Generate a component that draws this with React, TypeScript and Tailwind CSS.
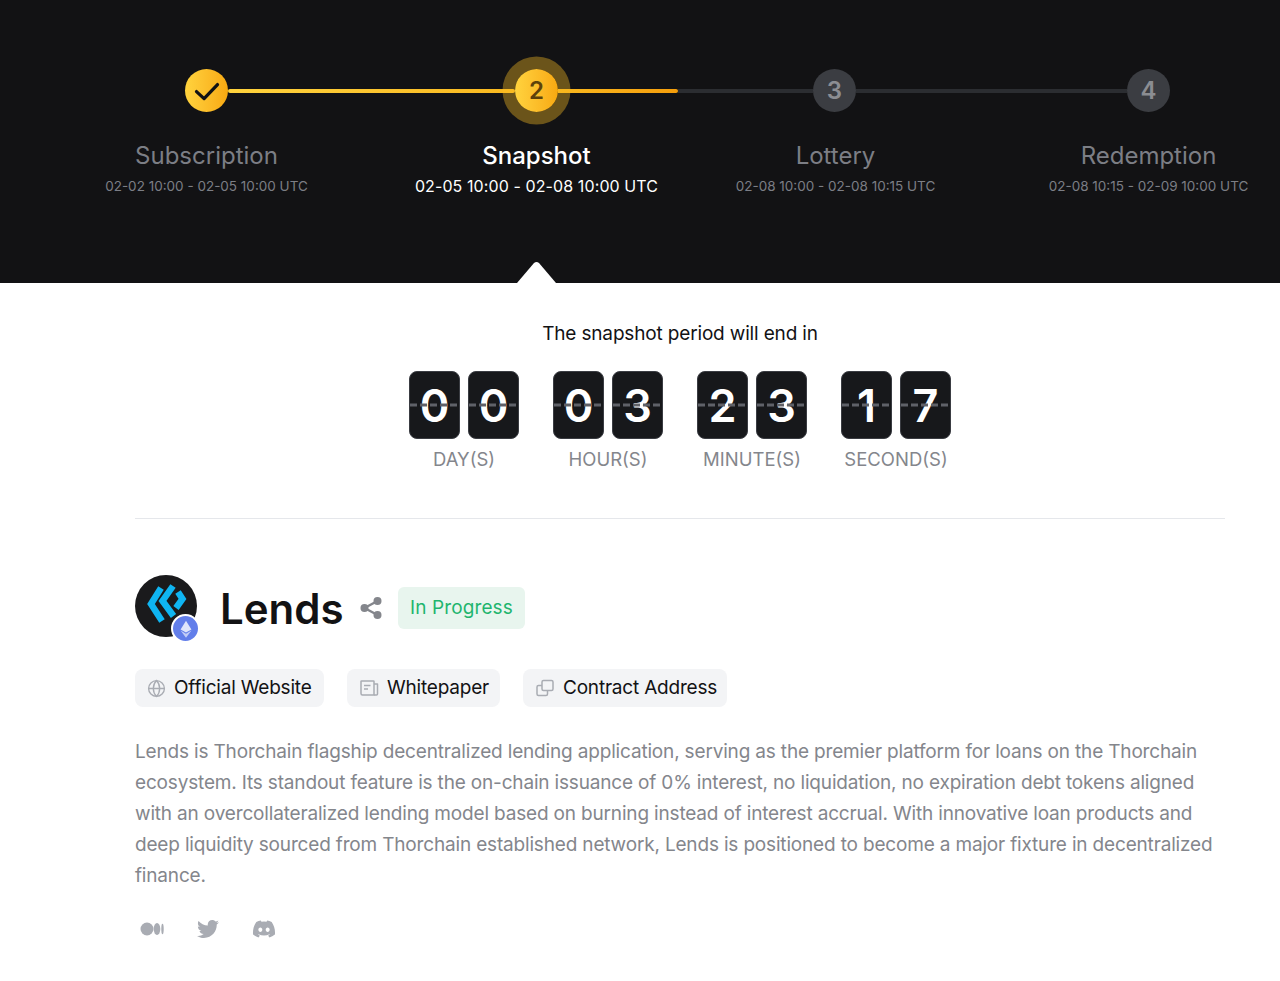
import { Globe } from 'lucide-react'
import { FaDiscord, FaTwitter } from 'react-icons/fa'

const FONT = 'font-["Inter","Liberation_Sans",sans-serif]'

const steps = [
  { title: 'Subscription', date: '02-02 10:00 - 02-05 10:00 UTC', className: 'w-[203px]' },
  { title: 'Snapshot', date: '02-05 10:00 - 02-08 10:00 UTC', className: 'ml-[107px] w-[243px]', active: true },
  { title: 'Lottery', date: '02-08 10:00 - 02-08 10:15 UTC', className: 'ml-[76px] w-[203px]' },
  { title: 'Redemption', date: '02-08 10:15 - 02-09 10:00 UTC', className: 'ml-[110px] w-[203px]' },
]

const countdown = [
  { label: 'DAY(S)', digits: ['0', '0'] },
  { label: 'HOUR(S)', digits: ['0', '3'] },
  { label: 'MINUTE(S)', digits: ['2', '3'] },
  { label: 'SECOND(S)', digits: ['1', '7'] },
]

const GoldCircle = ({ children }: { children: React.ReactNode }) => (
  <div className="flex size-[43px] shrink-0 items-center justify-center rounded-full bg-linear-to-r from-[#ffd33d] to-[#f8a90f]">
    {children}
  </div>
)

const GrayCircle = ({ n }: { n: string }) => (
  <div className="flex size-[43px] shrink-0 items-center justify-center rounded-full bg-[#3b3d42] text-[24px] font-semibold text-[#8b8d92]">
    {n}
  </div>
)

const Stepper = () => (
  <div className="relative h-[283px] bg-[#121214] pt-[69px]">
    <div className="ml-[185px] flex items-center">
      <GoldCircle>
        <svg viewBox="0 0 24 24" className="size-[28px]" fill="none" stroke="#121214" strokeWidth="2.8" strokeLinecap="round" strokeLinejoin="round">
          <path d="M3 12.5 9.5 18.5 21 6.5" />
        </svg>
      </GoldCircle>
      <div className="h-1 w-[287px] rounded-full bg-linear-to-r from-[#ffd33d] to-[#f9b81e]" />
      <div className="rounded-full shadow-[0_0_0_12.5px_rgba(252,191,36,0.38)]">
        <GoldCircle>
          <span className="text-[24px] font-semibold text-[#5d420b]">2</span>
        </GoldCircle>
      </div>
      <div className="h-1 w-[120px] rounded-r-full bg-linear-to-r from-[#f9b81e] to-[#f59e0b]" />
      <div className="h-1 w-[135px] bg-[#2b2d31]" />
      <GrayCircle n="3" />
      <div className="h-1 w-[271px] bg-[#2b2d31]" />
      <GrayCircle n="4" />
    </div>
    <div className="mt-[28px] flex pl-[105px]">
      {steps.map(step => (
        <div key={step.title} className={`${step.className} flex flex-col items-center`}>
          <div
            className={
              step.active
                ? 'text-[24px] leading-[32px] font-medium text-white'
                : 'text-[24px] leading-[32px] text-[#7c7e85]'
            }
          >
            {step.title}
          </div>
          <div
            className={
              step.active
                ? 'mt-[4px] text-[16px] leading-[20px] tracking-[0.1px] whitespace-nowrap text-white'
                : 'mt-[4px] text-[13.5px] leading-[20px] whitespace-nowrap text-[#7c7e85]'
            }
          >
            {step.date}
          </div>
        </div>
      ))}
    </div>
    <svg viewBox="0 0 40 22" className="absolute bottom-0 left-[517px] h-[22px] w-[40px]" fill="white">
      <path d="M0 22 17 2Q19.500 0 22 2L39 22Z" />
    </svg>
  </div>
)

const Countdown = () => (
  <div className="flex flex-col items-center pt-[37px]">
    <div className="text-[19px] leading-[28px] tracking-[-0.16px] text-[#121214]">The snapshot period will end in</div>
    <div className="mt-[23px] flex gap-[34px]">
      {countdown.map(group => (
        <div key={group.label} className="flex flex-col items-center">
          <div className="flex gap-[8px]">
            {group.digits.map((d, i) => (
              <div
                key={i}
                className="relative flex h-[68px] w-[51px] items-center justify-center rounded-[8px] border border-[#3a3c42] bg-[#17181b] pt-[1px] text-[45px] leading-none font-semibold text-white"
              >
                {d}
                <div className="absolute inset-x-0 top-1/2 h-[3px] -translate-y-1/2 bg-[repeating-linear-gradient(90deg,#5f6168_0_7px,transparent_7px_10px)]" />
              </div>
            ))}
          </div>
          <div className="mt-[8px] text-[18.5px] leading-[24px] text-[#84868c]">{group.label}</div>
        </div>
      ))}
    </div>
  </div>
)

const Logo = () => (
  <div className="relative size-[62px] shrink-0">
    <div className="flex size-[62px] items-center justify-center rounded-full bg-[#1a1a1c]">
      <svg viewBox="0 0 62 62" className="size-[62px]" fill="none" stroke="#0fb5f2" strokeWidth="6.5">
        <path d="M26 13 16 29 27 46" />
        <path d="M38 11 27.500 26 38.500 41" />
        <path d="M43 17 47.500 24 41 33" />
      </svg>
    </div>
    <div className="absolute top-[39px] left-[36px] flex size-[29px] items-center justify-center rounded-full border-2 border-white bg-[#627eea]">
      <svg viewBox="0 0 24 24" className="size-[20px]">
        <path d="M12 2 5.500 12.500 12 16.300 18.500 12.500Z" fill="#dfe5fb" />
        <path d="M12 17.700 5.500 13.800 12 22.500 18.500 13.800Z" fill="#c3cdf6" />
      </svg>
    </div>
  </div>
)

const LinkChip = ({ icon, label, className }: { icon: React.ReactNode; label: string; className: string }) => (
  <div className={`flex h-[38px] items-center rounded-[8px] bg-[#f3f4f6] pl-[12px] ${className}`}>
    {icon}
    <span className="pt-[1px] text-[19px] tracking-[-0.2px] whitespace-nowrap text-[#121214]">{label}</span>
  </div>
)

const description = [
  'Lends is Thorchain flagship decentralized lending application, serving as the premier platform for loans on the Thorchain',
  'ecosystem. Its standout feature is the on-chain issuance of 0% interest, no liquidation, no expiration debt tokens aligned',
  'with an overcollateralized lending model based on burning instead of interest accrual. With innovative loan products and',
  'deep liquidity sourced from Thorchain established network, Lends is positioned to become a major fixture in decentralized',
  'finance.',
]

const Project = () => (
  <div className="pt-[56px]">
    <div className="flex h-[62px] items-center">
      <Logo />
      <h1 className="mt-[6px] ml-[23px] w-[123px] text-[42px] leading-[62px] font-semibold text-[#121214]">Lends</h1>
      <svg viewBox="0 0 24 24" className="mt-[4px] ml-[16px] size-[24px]" fill="#84868c" stroke="#84868c">
        <circle cx="18.500" cy="5" r="4" stroke="none" />
        <circle cx="18.500" cy="19" r="4" stroke="none" />
        <circle cx="5.500" cy="12" r="4" stroke="none" />
        <path d="M5.500 12 18.500 5M5.500 12 18.500 19" strokeWidth="2.500" />
      </svg>
      <div className="mt-[4px] ml-[15px] flex h-[42px] w-[127px] items-center justify-center rounded-[6px] bg-[#e8f5ee] pt-[1px] text-[19px] tracking-[0.1px] text-[#1fb56e]">
        In Progress
      </div>
    </div>
    <div className="mt-[32px] flex">
      <LinkChip
        className="w-[189px]"
        label="Official Website"
        icon={<Globe className="mr-[8px] size-[19px] shrink-0 text-[#a9acb3]" aria-hidden strokeWidth={1.7} />}
      />
      <LinkChip
        className="ml-[23px] w-[153px]"
        label="Whitepaper"
        icon={
          <svg viewBox="0 0 20 20" className="mr-[8px] size-[20px] shrink-0" fill="none" stroke="#a9acb3" strokeWidth="1.500" strokeLinejoin="round">
            <path d="M2 3.500Q2 3 2.500 3H14.500Q15 3 15 3.500V17H3.500Q2 17 2 15.500Z" />
            <path d="M15 6H18.500V16Q18.500 17 17.500 17H15" />
            <path d="M5 7.500H11.500M5 11H9" />
          </svg>
        }
      />
      <LinkChip
        className="ml-[23px] w-[204px]"
        label="Contract Address"
        icon={
          <svg viewBox="0 0 20 20" className="mr-[8px] size-[20px] shrink-0" fill="none" stroke="#a9acb3" strokeWidth="1.500" strokeLinejoin="round">
            <rect x="7" y="2.500" width="11" height="10" rx="1.500" />
            <path d="M7 7.500H3.500Q2 7.500 2 9V16Q2 17.500 3.500 17.500H11Q12.500 17.500 12.500 16V12.500" />
          </svg>
        }
      />
    </div>
    <div className="mt-[29px] text-[19px] leading-[31px] tracking-[-0.17px] whitespace-nowrap text-[#84868c]">
      {description.map(line => (
        <div key={line}>{line}</div>
      ))}
    </div>
    <div className="mt-[26px] flex items-center text-[#a9acb3]">
      <svg viewBox="0 0 24 14" className="ml-[5px] h-[14px] w-[24px]" fill="currentColor">
        <circle cx="7" cy="7" r="6.500" />
        <ellipse cx="17" cy="7" rx="3.300" ry="6" />
        <ellipse cx="22.500" cy="7" rx="1.200" ry="5.300" />
      </svg>
      <FaTwitter className="ml-[33px] size-[22px]" aria-hidden />
      <FaDiscord className="ml-[33px] size-[24px]" aria-hidden />
    </div>
  </div>
)

const App = () => (
  <div className={`${FONT} min-h-[981px] bg-white`}>
    <Stepper />
    <div className="pr-[55px] pl-[135px]">
      <div className="border-b border-[#e5e7eb] pb-[47px]">
        <Countdown />
      </div>
      <Project />
    </div>
  </div>
)

export default App
